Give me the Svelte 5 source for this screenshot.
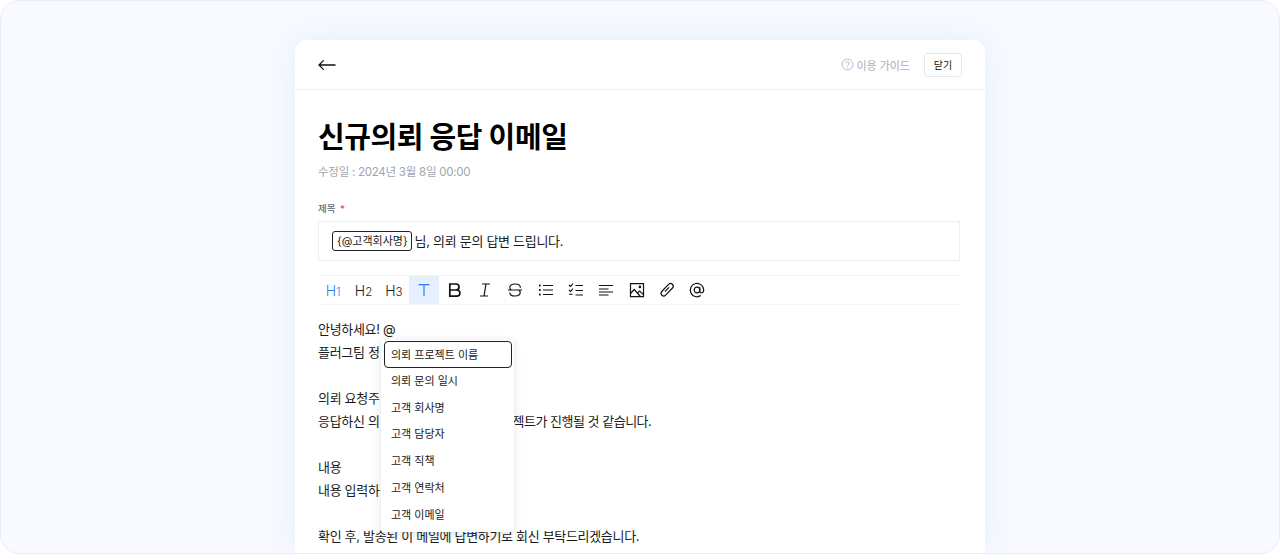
<script>
  const items = ['의뢰 프로젝트 이름','의뢰 문의 일시','고객 회사명','고객 담당자','고객 직책','고객 연락처','고객 이메일'];
</script>

<div class="frame">
  <main class="card">
    <header class="top">
      <svg class="back" width="18" height="12" viewBox="0 0 18 12" fill="none" stroke="#111" stroke-width="1.3"><path d="M17.5 6H1M5.6 1.4 1 6l4.6 4.6"/></svg>
      <div class="actions">
        <svg width="13" height="13" viewBox="0 0 13 13" fill="none" stroke="#b4b8c4" stroke-width="1"><circle cx="6.5" cy="6.5" r="5.5"/><path d="M4.8 5.2c0-2.2 3.5-2.2 3.5-.1 0 1.2-1.8 1.3-1.8 2.7"/><path d="M6.5 9v1"/></svg>
        <span class="guide">이용 가이드</span>
        <button class="close">닫기</button>
      </div>
    </header>
    <div class="body">
      <h1>신규의뢰 응답 이메일</h1>
      <p class="date">수정일 : 2024년 3월 8일 00:00</p>
      <label class="lbl">제목 <em>*</em></label>
      <div class="subject"><span class="chip">{'{@고객회사명}'}</span><span class="subj-text">님, 의뢰 문의 답변 드립니다.</span></div>
      <div class="toolbar">
        <span class="tool blue h">H<small>1</small></span>
        <span class="tool h">H<small>2</small></span>
        <span class="tool h">H<small>3</small></span>
        <span class="tool active">
          <svg width="18" height="18" viewBox="0 0 18 18" fill="none" stroke="#2f7bf6" stroke-width="1.2"><path d="M3.5 3.6h11M9 3.6V15"/></svg>
        </span>
        <span class="tool"><svg width="18" height="18" viewBox="0 0 18 18" fill="none" stroke="#111" stroke-width="1.7"><path d="M3.8 3h6.2a3 3 0 0 1 0 6H3.8zM3.8 9h7a3.1 3.1 0 0 1 0 6.2h-7z"/></svg></span>
        <span class="tool"><svg width="18" height="18" viewBox="0 0 18 18" fill="none" stroke="#111" stroke-width="1.2"><path d="M6 3h8M4 15h8M10 3 8 15"/></svg></span>
        <span class="tool"><svg width="18" height="18" viewBox="0 0 18 18" fill="none" stroke="#111" stroke-width="1.2"><path d="M2 9h14M14.4 6.8C14.4 4.2 12.2 3 9 3S3.8 4.4 3.8 6.4c0 1.1.6 2 1.5 2.6M3.8 11.4C3.8 13.8 6 15 9 15s5.2-1.2 5.2-3.4c0-1-.4-1.9-1.2-2.6"/></svg></span>
        <span class="tool"><svg width="18" height="18" viewBox="0 0 18 18" fill="none" stroke="#111" stroke-width="1.2"><path d="M6 4.5h10M6 9h10M6 13.5h10"/><path stroke-width="2" d="M2 4.5h1.6M2 9h1.6M2 13.5h1.6"/></svg></span>
        <span class="tool"><svg width="18" height="18" viewBox="0 0 18 18" fill="none" stroke="#111" stroke-width="1.1"><path d="M8.5 4.5h7.5M8.5 9.5h7.5M8.5 14h7.5M2 4l1.5 1.5L6 2.6M2 9l1.5 1.5L6 7.6M2 13.2h3.6"/></svg></span>
        <span class="tool"><svg width="18" height="18" viewBox="0 0 18 18" fill="none" stroke="#111" stroke-width="1.2"><path d="M2 4.5h14M2 8h9.5M2 11h14M2 14h9.5"/></svg></span>
        <span class="tool"><svg width="18" height="18" viewBox="0 0 18 18" fill="none" stroke="#111" stroke-width="1.2"><path d="M2.5 2.6h13v13h-13z"/><path d="m2.5 12.5 3.8-4 6 7M9.8 11.8 11.5 10l4 3.6"/><circle cx="11.9" cy="5.9" r="1.3" fill="#111" stroke="none"/></svg></span>
        <span class="tool"><svg width="18" height="18" viewBox="0 0 18 18" fill="none" stroke="#111" stroke-width="1.2"><path d="M11 6.3 6.9 10.6M5.5 8.6l5.1-5.3a2.6 2.6 0 0 1 3.9 3.7l-6.9 7.1a2.6 2.6 0 0 1-3.8-3.6L9 4.9"/></svg></span>
        <span class="tool"><svg width="18" height="18" viewBox="0 0 18 18" fill="none" stroke="#111" stroke-width="1.2"><circle cx="9" cy="9" r="2.8"/><path d="M11.8 6.2v4c0 2.3 3.9 2.3 3.9-1.2a6.7 6.7 0 1 0-2.9 5.6"/></svg></span>
      </div>
      <div class="editor">
        <p>안녕하세요! @</p>
        <p>플러그팀 정</p>
        <p class="gap">의뢰 요청주</p>
        <p>응답하신 의<span class="rest">젝트가 진행될 것 같습니다.</span></p>
        <p class="gap">내용</p>
        <p>내용 입력하</p>
        <p class="gap">확인 후, 발송된 이 메일에 답변하기로 회신 부탁드리겠습니다.</p>
        <ul class="menu">
          {#each items as item, i}
            <li class:sel={i === 0}>{item}</li>
          {/each}
        </ul>
      </div>
    </div>
  </main>
</div>

<style>
  :global(body) { margin: 0; }
  .frame {
    box-sizing: border-box;
    width: 1280px; height: 554px;
    padding-top: 39px;
    background: #f8faff;
    border: 1px solid #e6eefc;
    border-radius: 20px;
    overflow: hidden;
    font-family: Inter, "Noto Sans CJK KR", sans-serif;
    color: #1a1a1a;
  }
  .card {
    width: 690px; height: 513px;
    margin-left: 294px;
    background: #fff;
    border-radius: 12px 12px 0 0;
    box-shadow: 0 0 30px rgba(70, 120, 240, .1);
    overflow: hidden;
  }
  .top {
    height: 49px;
    border-bottom: 1px solid #eceef2;
    display: flex; align-items: center; justify-content: space-between;
    padding: 0 23px;
  }
  .back { display: block; }
  .actions { display: flex; align-items: center; }
  .guide { font-size: 11px; font-weight: 500; color: #b7bbc6; margin-left: 2px; }
  .close {
    width: 38px; height: 24px; margin-left: 14px; padding: 0;
    background: #fff; border: 1px solid #e5e7ec; border-radius: 3px;
    font: 400 10px Inter, "Noto Sans CJK KR", sans-serif; color: #111;
  }
  .body { padding: 0 25px 0 23px; }
  h1 {
    margin: 29px 0 0; height: 38px; line-height: 38px;
    font-size: 29px; font-weight: 700; letter-spacing: -.4px; color: #000;
  }
  .date { margin: 6px 0 0; font-size: 11.5px; line-height: 18px; color: #a0a4b0; letter-spacing: -.25px; }
  .lbl { display: block; margin-top: 21px; font-size: 9.5px; line-height: 14px; font-weight: 500; color: #666a75; }
  .lbl em { color: #f0445a; font-style: normal; margin-left: 2px; }
  .subject {
    box-sizing: border-box; height: 40px; margin-top: 5px;
    border: 1px solid #eceef2;
    display: flex; align-items: center; gap: 3px;
    padding: 0 0 1px 13px;
    font-size: 13px; white-space: pre;
  }
  .subj-text { letter-spacing: -.3px; }
  .chip {
    box-sizing: border-box; height: 20px; line-height: 18px;
    padding: 0 3px 0 4px;
    border: 1px solid #222; border-radius: 3px;
    font-size: 11px;
  }
  .toolbar {
    box-sizing: border-box; height: 30px; margin-top: 14px;
    border-top: 1px solid #f3f4f7; border-bottom: 1px solid #f3f4f7;
    display: flex;
  }
  .tool { width: 30.35px; height: 28px; display: flex; align-items: center; justify-content: center; flex: none; }
  .h { font-size: 14px; font-weight: 300; }
  .h small { font-size: 11.5px; margin-top: 3px; }
  .blue { color: #2f7bf6; }
  .active { background: #e6effd; }
  .editor { position: relative; padding-top: 13px; font-size: 13px; line-height: 23px; letter-spacing: -.32px; }
  .editor p { margin: 0; white-space: nowrap; }
  .editor .gap { margin-top: 23px; }
  .rest { margin-left: 133px; letter-spacing: -.5px; }
  .menu {
    position: absolute; left: 63px; top: 35px;
    width: 133px; height: 192px; box-sizing: border-box;
    margin: 0; padding: 1px 2px 1px 3px;
    list-style: none; background: #fff;
    border-radius: 4px;
    box-shadow: 0 2px 10px rgba(20, 30, 60, .13);
    font-size: 11px; letter-spacing: 0;
  }
  .menu li {
    box-sizing: border-box; height: 26.75px; line-height: 25.5px;
    padding-left: 6px; border: 1px solid transparent; border-radius: 4px;
  }
  .menu li.sel { border-color: #222; line-height: 26px; }
</style>
